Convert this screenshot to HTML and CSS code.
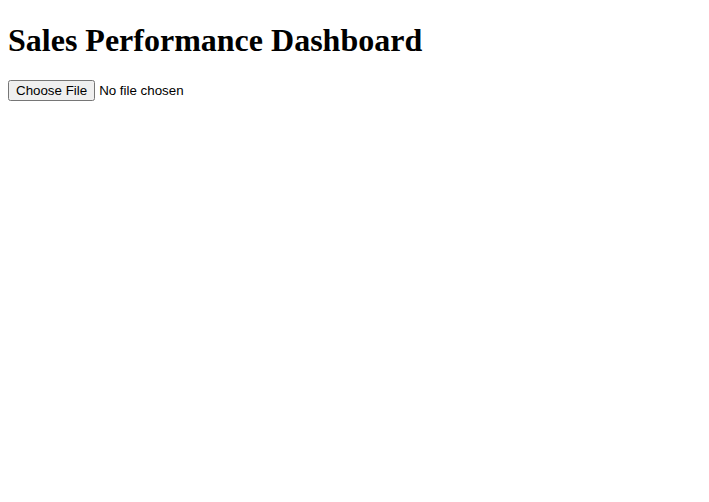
FILE: index.html
```html
<!DOCTYPE html>
<html>
<head>
<meta charset="utf-8">
<title>Sales Performance Dashboard</title>
<link rel="stylesheet" href="styles.css">
</head>
<body>
<h1 class="title">Sales Performance Dashboard</h1>
<input type="file" class="file-input">
</body>
</html>
```
FILE: styles.css
```css
body {
  margin: 8px;
  font-family: "Liberation Serif", serif;
  background: #fff;
  color: #000;
}
.title {
  font-family: "Liberation Serif", serif;
  font-size: 32px;
  font-weight: bold;
  margin: 14px 0 21px;
}
.file-input {
  font-family: "Liberation Sans", Arial, sans-serif;
  font-size: 13.333px;
}
```
